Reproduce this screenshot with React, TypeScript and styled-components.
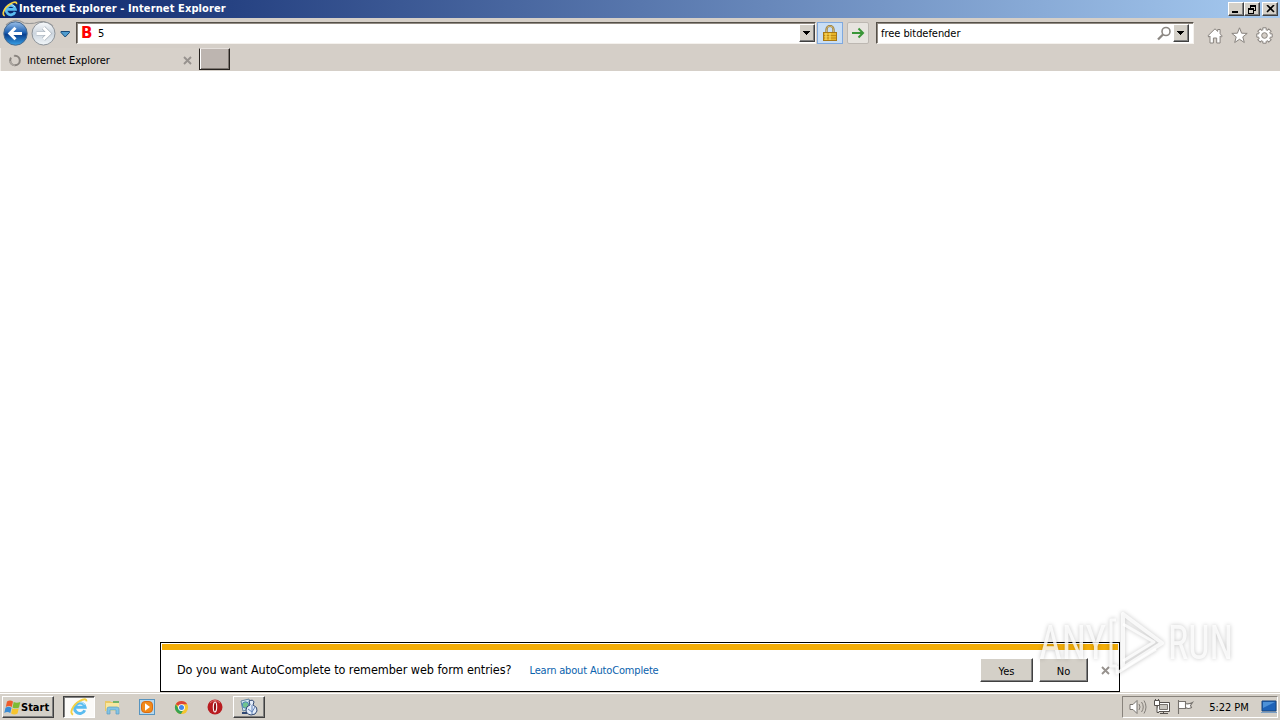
import React from "react";
import styled, { createGlobalStyle, css } from "styled-components";

const GlobalStyle = createGlobalStyle`
  * { box-sizing: border-box; }
  body {
    margin: 0;
    overflow: hidden;
    font-family: "DejaVu Sans Condensed", "DejaVu Sans", sans-serif;
    font-stretch: condensed;
    font-size: 11px;
    color: #000;
  }
  svg { display: block; flex: none; }
`;

const raised = css`
  background: #d4d0c8;
  border: 1px solid;
  border-color: #fff #404040 #404040 #fff;
  box-shadow: inset -1px -1px 0 #808080;
`;

const Screen = styled.div`
  width: 1280px;
  height: 720px;
  display: flex;
  flex-direction: column;
  position: relative;
  background: #fff;
`;

const TitleBar = styled.header`
  height: 18px;
  display: flex;
  align-items: center;
  padding: 0 2px;
  background: linear-gradient(90deg, #0a246a, #a6caf0);
  color: #fff;
`;

const Text = styled.span<{
  size?: number;
  spacing?: number;
  bold?: boolean;
  color?: string;
  left?: number;
  top?: number;
}>`
  white-space: nowrap;
  line-height: 14px;
  padding-top: ${(p) => p.top ?? 1}px;
  margin-left: ${(p) => p.left || 0}px;
  font-size: ${(p) => p.size || 11}px;
  letter-spacing: ${(p) => p.spacing || 0}px;
  font-weight: ${(p) => (p.bold ? 700 : 400)};
  color: ${(p) => p.color || "inherit"};
`;

const SiteLetter = styled.span`
  font: 700 15px/18px "DejaVu Sans", sans-serif;
  font-stretch: normal;
  color: #f00;
  padding-left: 1px;
  width: 14px;
`;

const WindowButtons = styled.div`
  display: flex;
  margin-left: auto;
`;

const WindowButton = styled.button<{ gap?: number }>`
  ${raised}
  width: 16px;
  height: 14px;
  padding: 0;
  margin-left: ${(p) => p.gap || 0}px;
  display: flex;
  align-items: center;
  justify-content: center;
`;

const Toolbar = styled.div`
  height: 30px;
  display: flex;
  align-items: center;
  padding-left: 2px;
  background: #d5cfc8;
`;

const Field = styled.div<{ width: number; left: number }>`
  width: ${(p) => p.width}px;
  height: 22px;
  margin-left: ${(p) => p.left}px;
  padding: 0 0 0 3px;
  display: flex;
  align-items: center;
  background: #fff;
  border: 1px solid;
  border-color: #555049 #f5f2ee #f5f2ee #555049;
  box-shadow: inset 1px 1px 0 #918a82;
`;

const FieldEnd = styled.div`
  margin-left: auto;
  display: flex;
  align-items: center;
  gap: 1px;
`;

const DropButton = styled.button<{ right: number }>`
  ${raised}
  width: 16px;
  height: 18px;
  padding: 0;
  margin-right: ${(p) => p.right}px;
  display: flex;
  align-items: center;
  justify-content: center;
`;

const SquareButton = styled.button<{ active?: boolean }>`
  width: ${(p) => (p.active ? 26 : 22)}px;
  height: 22px;
  padding: 0;
  display: flex;
  align-items: center;
  justify-content: center;
  border: 1px solid ${(p) => (p.active ? "#7fa9df" : "#bdb8b2")};
  border-radius: ${(p) => (p.active ? 0 : 2)}px;
  background: ${(p) => (p.active ? "#c9def5" : "#e7e4df")};
  margin-left: ${(p) => (p.active ? 1 : 4)}px;
`;

const Tools = styled.div`
  display: flex;
  gap: 8px;
  margin: 4px 0 0 13px;
`;

const TabRow = styled.div`
  height: 23px;
  display: flex;
  align-items: flex-start;
  background: #d5cfc8;
`;

const Tab = styled.div`
  width: 198px;
  height: 23px;
  display: flex;
  align-items: center;
  padding: 1px 6px 0 8px;
  border-left: 1px solid #eeeae5;
  background: #d7d1ca;
`;

const TabClose = styled.span`
  margin-left: auto;
`;

const NewTab = styled.div`
  width: 31px;
  height: 22px;
  margin-left: 1px;
  background: #bdb5b0;
  border: 1px solid #26221f;
  border-top: 1px solid #e5e0dc;
  box-shadow: inset 1px 0 0 #fff, inset -1px -1px 0 #7c7570;
`;

const Page = styled.main`
  flex: 1;
  display: flex;
  align-items: flex-end;
  justify-content: center;
  background: #fff;
`;

const Notice = styled.section`
  width: 960px;
  height: 50px;
  border: 1px solid #000;
  padding: 1px;
  background: #fff;
`;

const NoticeStripe = styled.div`
  height: 6px;
  background: #f4ae08;
`;

const NoticeBody = styled.div`
  height: 40px;
  display: flex;
  align-items: center;
  padding-left: 15px;
`;

const Actions = styled.div`
  display: flex;
  align-items: center;
  gap: 6px;
  margin: 0 8px 0 auto;
`;

const NoticeButton = styled.button<{ width: number }>`
  ${raised}
  width: ${(p) => p.width}px;
  height: 24px;
  padding: 2px 0 0;
  font: inherit;
`;

const NoticeClose = styled.span`
  margin-left: 7px;
  padding-top: 1px;
`;

const Taskbar = styled.footer`
  height: 28px;
  display: flex;
  align-items: center;
  padding: 1px 2px 0;
  background: #d5d0c8;
  border-top: 1px solid #d5d0c8;
  box-shadow: inset 0 1px 0 #fff;
`;

const StartButton = styled.button`
  ${raised}
  width: 52px;
  height: 22px;
  padding: 0 0 0 1px;
  display: flex;
  align-items: center;
  font: inherit;
`;

const TaskSlot = styled.div<{ kind?: "pressed" | "raised" }>`
  width: ${(p) => (p.kind ? 32 : 34)}px;
  height: 22px;
  display: flex;
  align-items: center;
  justify-content: center;
  ${(p) => p.kind === "raised" && raised}
  ${(p) =>
    p.kind === "pressed" &&
    css`
      background: #fbfaf8;
      border: 1px solid;
      border-color: #404040 #fff #fff #404040;
      box-shadow: inset 1px 1px 0 #808080;
      margin-right: 1px;
    `}
`;

const TaskList = styled.div`
  display: flex;
  margin-left: 9px;
`;

const SlotGap = styled.div`
  width: 1px;
`;

const Tray = styled.div`
  width: 156px;
  height: 22px;
  margin-left: auto;
  display: flex;
  align-items: center;
  padding-left: 6px;
  border: 1px solid;
  border-color: #88837c #fff #fff #88837c;
`;

const Clock = styled.div`
  width: 67px;
  display: flex;
  justify-content: center;
  padding-left: 2px;
`;

const Watermark = styled.svg`
  position: absolute;
  left: 1030px;
  top: 604px;
  filter: drop-shadow(0 0 2px rgba(0, 0, 0, 0.28));
`;

const IeIcon = ({ size = 16 }: { size?: number }) => (
  <svg width={size} height={size} viewBox="0 0 16 16" fill="none">
    <path d="M13.1 10.9A4.7 4.7 0 1 1 13.4 8.3H4.8" stroke="#5abcf0" strokeWidth="2.7" />
    <path d="M4.5 6a4.9 4.9 0 0 1 8.5 0" stroke="#b4e4fa" strokeWidth="1" />
    <path d="M2.8 14.7C-.8 14 2 6.5 8.5 2.7c3.6-2 6.4-2.4 6 .4" stroke="#f5d042" strokeWidth="1.7" />
  </svg>
);

const NavButtons = () => (
  <svg width="70" height="30" viewBox="0 0 70 30">
    <defs>
      <linearGradient id="back" x2="0" y2="1">
        <stop stopColor="#9cc0e8" />
        <stop offset=".45" stopColor="#1f62b4" />
        <stop offset=".55" stopColor="#0a408f" />
        <stop offset="1" stopColor="#38a2e8" />
      </linearGradient>
      <linearGradient id="forward" x2="0" y2="1">
        <stop stopColor="#f8fafc" />
        <stop offset=".5" stopColor="#ccd5de" />
        <stop offset="1" stopColor="#f2f7fa" />
      </linearGradient>
    </defs>
    <path d="M4 7Q13-1 22 5q5.5 1 11 0 9-4 18 3" fill="none" stroke="#9b9a99" strokeWidth="1.2" />
    <circle cx="13.5" cy="15.5" r="11.7" fill="url(#back)" stroke="#45698f" />
    <path d="M20 15.5H9M13.5 9.8 7.8 15.5l5.7 5.7" fill="none" stroke="#fff" strokeWidth="3" />
    <circle cx="41.5" cy="15.5" r="11.5" fill="url(#forward)" stroke="#8c9298" />
    <path d="M34.5 15.5H46M41.5 9.8l5.7 5.7-5.7 5.7" fill="none" stroke="#a8b1bb" strokeWidth="4.2" />
    <path d="M34.5 15.5H46M41.5 9.8l5.7 5.7-5.7 5.7" fill="none" stroke="#fff" strokeWidth="3" />
    <path d="M59 13.5h8.5v1L63.2 19 59 14.5z" fill="#4f9ccf" stroke="#174a79" />
  </svg>
);

const Arrow = () => (
  <svg width="8" height="5" viewBox="0 0 8 5" shapeRendering="crispEdges">
    <path d="M0 0h7v1H6v1H5v1H4v1H3V3H2V2H1V1H0z" />
  </svg>
);

const Cross = () => (
  <svg width="9" height="9" viewBox="0 0 9 9">
    <path d="m1 1 7 7M8 1 1 8" stroke="#97928e" strokeWidth="1.9" />
  </svg>
);

const Lock = () => (
  <svg width="14" height="17" viewBox="0 0 14 17">
    <path d="M3.5 8V4.5a3.5 3.5 0 0 1 7 0V8" fill="none" stroke="#927332" strokeWidth="2.2" />
    <path d="M3.5 8V4.5a3.5 3.5 0 0 1 7 0V8" fill="none" stroke="#dfca87" strokeWidth=".8" />
    <rect x=".5" y="7.5" width="13" height="8" fill="#e8b52b" stroke="#a77816" />
    <path d="M1 10.5h12M1 13h12" stroke="#bf8a18" />
    <path d="M3 8v7M7 8v7" stroke="#f7db68" strokeWidth="1.2" />
  </svg>
);

const ToolIcons = () => (
  <Tools>
    <svg width="16" height="17" viewBox="0 0 16 17" fill="#fff" stroke="#88837e" strokeWidth="1">
      <path d="M1 8.7 8 1.8l2.7 2.6V2.5h2.4v4.3L15.2 9l-.8 1-1.3-1V16H9.7v-5H6.4v5H3V9L1.7 10z" />
    </svg>
    <svg width="17" height="17" viewBox="0 0 17 17" fill="#fff" stroke="#88837e" strokeWidth="1">
      <path d="m8.5.8 2.1 5.4 5.6.2-4.4 3.5 1.5 5.6-4.8-3.2-4.8 3.2 1.5-5.6L.8 6.4l5.6-.2z" />
    </svg>
    <svg width="17" height="17" viewBox="0 0 17 17" fill="#fff" stroke="#88837e" strokeWidth="1">
      {[0, 45, 90, 135, 180, 225, 270, 315].map((a) => (
        <path key={a} d="M6.8 4V.8h3.4V4" transform={`rotate(${a} 8.5 8.5)`} />
      ))}
      <circle cx="8.5" cy="8.5" r="4.6" stroke="#fff" strokeWidth="2" />
      <circle cx="8.5" cy="8.5" r="2.8" fill="#d5cfc8" />
    </svg>
  </Tools>
);

const WindowsFlag = () => (
  <svg width="17" height="17" viewBox="0 0 17 17">
    <path d="M3 2.5q3-2 6 0L7.8 8q-2.8-1.8-6 0z" fill="#ee5b2a" />
    <path d="M9.7 3q3 1.6 6.6 0L15 8.5q-3.2 1.7-6.5 0z" fill="#7dbb35" />
    <path d="M1.5 8.7q3-1.9 6 0L6.3 14q-3-1.9-6 0z" fill="#398bd4" />
    <path d="M8.3 9.2q3.2 1.7 6.5 0l-1.3 5.3q-3.2 1.8-6.4 0z" fill="#f6c42e" />
  </svg>
);

const Folder = () => (
  <svg width="18" height="18" viewBox="0 0 18 18">
    <path d="M1 3h5l1 1h8v9H1z" fill="#e9c765" />
    <path d="M2 5h13v8H2z" fill="#f8e7a0" />
    <path d="M9 3h6v2H9z" fill="#72b36b" />
    <path d="M3 16v-5q0-2 2-2h8q2 0 2 2v5h-3v-4H6v4z" fill="#83c4e5" stroke="#5b9fc3" strokeWidth=".7" />
  </svg>
);

const Player = () => (
  <svg width="18" height="18" viewBox="0 0 18 18">
    <rect x="1.5" y="1.5" width="15" height="15" fill="#b7d8ed" stroke="#5794bf" />
    <rect x="3.5" y="3.5" width="11" height="11" rx="3.5" fill="#f28a19" stroke="#d96b12" />
    <path d="m7 5.3 5 3.7-5 3.7z" fill="#fff" />
  </svg>
);

const Chrome = () => (
  <svg width="15" height="15" viewBox="0 0 16 16">
    <circle cx="8" cy="8" r="7" fill="#f4c52f" />
    <path d="M8 8 1.9 4.5A7 7 0 0 1 14 4.5H8z" fill="#dc4437" />
    <path d="M1.9 4.5A7 7 0 0 0 7.4 15l3.2-5.5L8 8 5 9.7z" fill="#36a254" />
    <circle cx="8" cy="8" r="3.6" fill="#fff" />
    <circle cx="8" cy="8" r="2.7" fill="#4387e8" />
  </svg>
);

const Opera = () => (
  <svg width="16" height="16" viewBox="0 0 16 16">
    <circle cx="8" cy="8" r="7.5" fill="#b91c20" />
    <path d="M3 4Q8-1 13 4" stroke="#df7773" fill="none" />
    <ellipse cx="8" cy="8" rx="1.7" ry="5" fill="#8e1115" stroke="#fff" strokeWidth="1.1" />
  </svg>
);

const Utility = () => (
  <svg width="18" height="18" viewBox="0 0 18 18">
    <path d="m1 3 8-2 2 9-8 3z" fill="#d7eaf4" stroke="#6285a2" />
    <circle cx="5.5" cy="7" r="3.2" fill="#70c38f" stroke="#4d86ba" />
    <path d="M9 3q4-2 5 1l-1 3q5 2 4 6-1 4-6 4-5-1-5-5 0-4 4-5z" fill="#e4edfa" stroke="#304873" />
    <path d="m8 11 4 3 3-5M12 7v9" fill="none" stroke="#6284bb" />
    <path d="M2 15h5" stroke="#304873" strokeWidth="2" />
  </svg>
);

const TrayIcons = () => (
  <svg width="66" height="18" viewBox="0 0 66 18" fill="#fff" stroke="#77736e">
    <path d="M1 6.5h3l4-4v13l-4-4H1z" />
    <path d="M10 6q2 3 0 6M12.5 4q3.5 5 0 10M15 2.5q4 6.5 0 13" fill="none" strokeWidth=".9" />
    <path d="M28.5 4.5h12v9h-12zM31 15.5h8M34.5 13.5v2" stroke="#55514d" />
    <path d="M30.5 6.5h8v5h-8z" fill="#c7c4be" />
    <path d="M25.5 2.5h5v5h-5zM26.5 1v2M29.5 1v2M28 7.5v7h2" stroke="#55514d" />
    <path d="M49.5 2v14M50 3.5h6.5v7H50M56.500 5.500q3 1 7-1l-2 3 1 2q-3 2-6 0" strokeWidth="1.1" />
  </svg>
);

export default function App() {
  return (
    <Screen>
      <GlobalStyle />
      <TitleBar>
        <IeIcon />
        <Text bold left={1} top={0} spacing={0.11}>Internet Explorer - Internet Explorer</Text>
        <WindowButtons>
          <WindowButton>
            <svg width="10" height="9"><path d="M1 6h6v2H1z" /></svg>
          </WindowButton>
          <WindowButton>
            <svg width="10" height="10" fill="none" stroke="#000" shapeRendering="crispEdges">
              <path d="M3 1h6M3 2h6M3.5 1v3M8.5 1v5.5H7M1 4h6M1 5h6M1.5 4v5.5h5V4" />
            </svg>
          </WindowButton>
          <WindowButton gap={2}>
            <svg width="9" height="8"><path d="m1 0 7 7M8 0 1 7" stroke="#000" strokeWidth="1.6" /></svg>
          </WindowButton>
        </WindowButtons>
      </TitleBar>

      <Toolbar>
        <NavButtons />
        <Field width={740} left={4}>
          <SiteLetter>B</SiteLetter>
          <Text left={4} top={2}>5</Text>
          <FieldEnd>
            <DropButton right={0}><Arrow /></DropButton>
          </FieldEnd>
        </Field>
        <SquareButton active><Lock /></SquareButton>
        <SquareButton>
          <svg width="14" height="14" fill="none" stroke="#3a9638" strokeWidth="2">
            <path d="M1 7h11M7.5 2.5 12 7l-4.5 4.5" />
          </svg>
        </SquareButton>
        <Field width={318} left={7}>
          <Text left={1} top={2} spacing={-0.05}>free bitdefender</Text>
          <FieldEnd>
            <svg width="15" height="15" fill="none" stroke="#8b8782">
              <circle cx="9" cy="5.5" r="4" strokeWidth="1.6" />
              <path d="m6 8.5-5 5" strokeWidth="2.3" />
            </svg>
            <DropButton right={4}><Arrow /></DropButton>
          </FieldEnd>
        </Field>
        <ToolIcons />
      </Toolbar>

      <TabRow>
        <Tab>
          <svg width="18" height="13" fill="none" strokeWidth="2">
            <circle cx="6" cy="6.5" r="4.8" stroke="#88837e" />
            <path d="M1.3 7A4.8 4.8 0 0 0 6 11.3" stroke="#aaa59f" />
            <path d="M2 3.5 4.5 1" stroke="#d7d1ca" strokeWidth="3" />
          </svg>
          <Text spacing={-0.05}>Internet Explorer</Text>
          <TabClose><Cross /></TabClose>
        </Tab>
        <NewTab />
      </TabRow>

      <Page>
        <Notice>
          <NoticeStripe />
          <NoticeBody>
            <Text size={12.5} top={0} spacing={-0.05}>Do you want AutoComplete to remember web form entries?</Text>
            <Text color="#0a62ad" left={18} spacing={-0.17}>Learn about AutoComplete</Text>
            <Actions>
              <NoticeButton width={53}>Yes</NoticeButton>
              <NoticeButton width={49}>No</NoticeButton>
              <NoticeClose><Cross /></NoticeClose>
            </Actions>
          </NoticeBody>
        </Notice>
      </Page>

      <Taskbar>
        <StartButton>
          <WindowsFlag />
          <Text bold>Start</Text>
        </StartButton>
        <TaskList>
          <TaskSlot kind="pressed"><IeIcon size={18} /></TaskSlot>
          <TaskSlot><Folder /></TaskSlot>
          <TaskSlot><Player /></TaskSlot>
          <TaskSlot><Chrome /></TaskSlot>
          <TaskSlot><Opera /></TaskSlot>
          <SlotGap />
          <TaskSlot kind="raised"><Utility /></TaskSlot>
        </TaskList>
        <Tray>
          <TrayIcons />
          <Clock><Text spacing={-0.05}>5:22 PM</Text></Clock>
          <svg width="16" height="14" viewBox="0 0 16 14">
            <path d="M1 1h14v10H1z" fill="#1d62b8" stroke="#17457f" />
            <path d="M2 2h12L2 8z" fill="#4d91d8" />
            <path d="M0 12h16v1H0z" fill="#7b9fc4" />
          </svg>
        </Tray>
      </Taskbar>

      <Watermark width="220" height="90" viewBox="0 0 220 90">
        <g fill="#fff" fillOpacity=".8" fontFamily="Roboto, sans-serif" fontSize="49">
          <text x="9" y="55" textLength="67" lengthAdjust="spacingAndGlyphs">ANY</text>
          <text x="138" y="55" textLength="65" lengthAdjust="spacingAndGlyphs">RUN</text>
        </g>
        <g fill="none" stroke="#fff" strokeOpacity=".8" strokeWidth="4" strokeLinejoin="round">
          <path d="M93 10v54l39-25z" />
          <path d="M93 20l31 18-31 19M86 16h-5v46h6M87 62v7l39-24" strokeWidth="3" />
        </g>
      </Watermark>
    </Screen>
  );
}
